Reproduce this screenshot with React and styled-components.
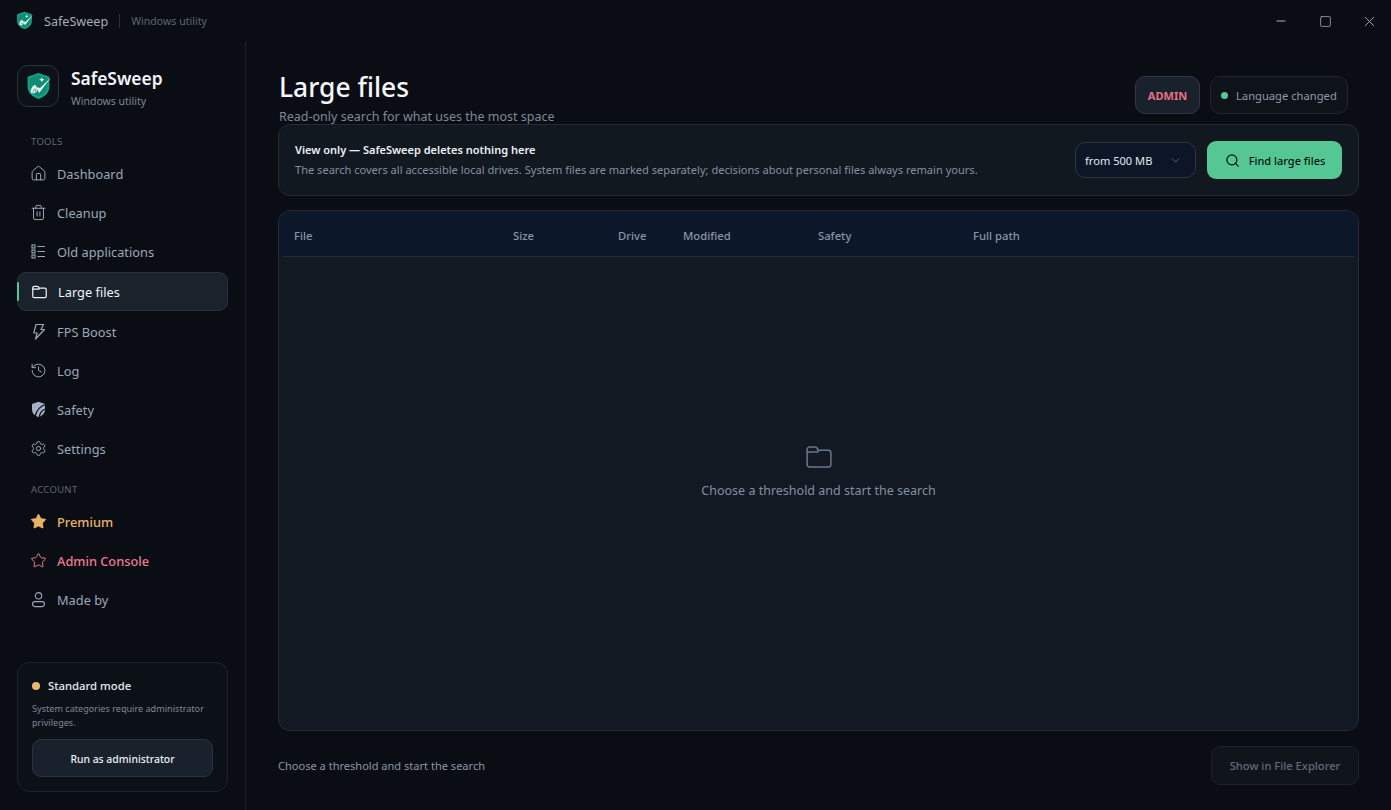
import React from "react";
import styled, { createGlobalStyle } from "styled-components";
import { House, Trash2, History, Settings, Star, Search, ChevronDown, X, Minus, Square } from "lucide-react";

const GlobalStyle = createGlobalStyle`
  html, body {
    margin: 0;
    height: 100%;
    background: #0a0d14;
    font-family: "Noto Sans", "Open Sans", sans-serif;
    color: #e8edf4;
    overflow: hidden;
  }
  * { box-sizing: border-box; }
`;

const Shell = styled.div`
  width: 1391px;
  height: 810px;
  display: grid;
  grid-template-rows: 42px 1fr;
  background: #0a0d14;
`;

const TitleBar = styled.header`
  display: flex;
  align-items: center;
  padding-left: 16px;
`;

const TitleName = styled.span`
  margin-left: 11px;
  font-size: 12.6px;
  color: #a3acb9;
`;

const TitleDivider = styled.span`
  width: 1px;
  height: 14px;
  margin: 0 11px;
  background: #2a313c;
`;

const TitleSub = styled.span`
  font-size: 10.6px;
  color: #5d6674;
`;

const WindowControls = styled.div`
  display: flex;
  margin-left: auto;
  height: 42px;
  color: #b4bcc7;
`;

const WindowButton = styled.button`
  width: 44px;
  height: 42px;
  display: flex;
  align-items: center;
  justify-content: center;
  padding: 0;
  background: none;
  border: 0;
  color: inherit;
`;

const Body = styled.div`
  display: grid;
  grid-template-columns: 246px 1fr;
  min-height: 0;
`;

const Sidebar = styled.aside`
  display: flex;
  flex-direction: column;
  padding: 23px 17px 18px 17px;
  border-right: 1px solid #1b212a;
`;

const Brand = styled.div`
  display: flex;
  align-items: center;
  gap: 12px;
  height: 42px;
`;

const BrandIcon = styled.div`
  width: 42px;
  height: 42px;
  display: flex;
  align-items: center;
  justify-content: center;
  border: 1px solid #2a313b;
  border-radius: 11px;
  background: #0d1219;
`;

const BrandText = styled.div`
  display: flex;
  flex-direction: column;
  padding-top: 4px;
`;

const BrandName = styled.strong`
  font-size: 17.4px;
  line-height: 23px;
  font-weight: 600;
  color: #f2f5f9;
`;

const BrandSub = styled.span`
  margin-top: 4px;
  font-size: 10.5px;
  line-height: 15px;
  color: #7f8997;
`;

const SectionLabel = styled.div`
  margin: ${(p) => p.$top}px 0 6px 14px;
  height: 14px;
  line-height: 14px;
  font-size: 9.5px;
  letter-spacing: 0.3px;
  color: #5f6876;
`;

const NavList = styled.nav`
  display: flex;
  flex-direction: column;
  gap: 2px;
`;

const NavItem = styled.a`
  display: flex;
  align-items: center;
  gap: 10px;
  height: ${(p) => (p.$active ? 39 : 37)}px;
  padding-left: 13px;
  font-size: 12.8px;
  border-radius: 9px;
  position: relative;
  color: ${(p) => p.$color || (p.$active ? "#f0f4f8" : "#9ca8b8")};
  font-weight: ${(p) => (p.$color ? 500 : 400)};
  ${(p) =>
    p.$active &&
    `
    background: #1a222c;
    border: 1px solid #29313c;
    &::before {
      content: "";
      position: absolute;
      left: -1px;
      top: 9px;
      bottom: 9px;
      width: 2px;
      background: #54c795;
      border-radius: 2px;
    }
  `}
`;

const NavIcon = styled.span`
  width: 17px;
  height: 17px;
  display: flex;
  align-items: center;
  justify-content: center;
  flex: none;
`;

const ModeCard = styled.section`
  margin-top: auto;
  padding: 15px 14px 14px 14px;
  height: 130px;
  border: 1px solid #1d232d;
  border-radius: 12px;
  background: #0c1017;
`;

const ModeHead = styled.div`
  display: flex;
  align-items: center;
  gap: 8px;
  font-size: 11.3px;
  line-height: 16px;
  font-weight: 500;
  color: #e6ebf1;
`;

const Dot = styled.span`
  width: ${(p) => p.$size || 8}px;
  height: ${(p) => p.$size || 8}px;
  border-radius: 50%;
  background: ${(p) => p.$color};
  flex: none;
`;

const ModeText = styled.p`
  margin: 8px 0 9px;
  font-size: 9.1px;
  line-height: 14px;
  color: #7f8997;
`;

const AdminRun = styled.button`
  width: 181px;
  height: 38px;
  padding: 2px 0 0;
  border: 1px solid #2b3440;
  border-radius: 9px;
  background: #19212c;
  color: #eef2f6;
  font: 500 10.4px "Noto Sans", sans-serif;
`;

const Main = styled.main`
  display: flex;
  flex-direction: column;
  padding: 20px 32px 25px 32px;
  min-width: 0;
`;

const Header = styled.div`
  display: flex;
  justify-content: space-between;
  align-items: flex-start;
  height: 62px;
`;

const PageTitle = styled.h1`
  margin: 8px 0 0 1px;
  font-size: 26.4px;
  line-height: 34px;
  font-weight: 500;
  color: #f5f7fa;
`;

const PageSub = styled.p`
  margin: 3px 0 0 1px;
  font-size: 12.5px;
  line-height: 20px;
  color: #7f8997;
`;

const HeaderBadges = styled.div`
  display: flex;
  gap: 10px;
  margin-top: 14px;
  margin-right: 11px;
`;

const AdminBadge = styled.div`
  width: 65px;
  height: 38px;
  display: flex;
  align-items: center;
  justify-content: center;
  border: 1px solid #2e3846;
  border-radius: 10px;
  background: #19212c;
  color: #e8708a;
  font-size: 11px;
  font-weight: 700;
`;

const Toast = styled.div`
  height: 38px;
  width: 138px;
  display: flex;
  align-items: center;
  gap: 8px;
  padding-left: 10px;
  border: 1px solid #1f2630;
  border-radius: 10px;
  background: #0e131a;
  color: #8f99a7;
  font-size: 11.2px;
`;

const Notice = styled.section`
  height: 72px;
  display: flex;
  align-items: center;
  padding: 0 16px;
  border: 1px solid #242b35;
  border-radius: 12px;
  background: #121820;
`;

const NoticeText = styled.div`
  flex: 1;
  margin-top: -1px;
`;

const NoticeTitle = styled.div`
  font-size: 11px;
  line-height: 18px;
  font-weight: 600;
  color: #eef2f6;
`;

const NoticeBody = styled.div`
  margin-top: 2px;
  font-size: 11.07px;
  line-height: 18px;
  color: #8390a0;
`;

const Threshold = styled.div`
  width: 121px;
  height: 36px;
  display: flex;
  align-items: center;
  justify-content: space-between;
  padding: 0 13px 0 9px;
  border: 1px solid #2a3545;
  border-radius: 10px;
  background: #0c1626;
  font-size: 11.1px;
  color: #e4e9ef;
`;

const FindButton = styled.button`
  width: 135px;
  height: 38px;
  margin-left: 11px;
  display: flex;
  align-items: center;
  justify-content: center;
  gap: 9px;
  padding: 0 0 0 1px;
  border: 0;
  border-radius: 9px;
  background: #54c795;
  color: #08130e;
  font: 500 11px "Noto Sans", sans-serif;
`;

const TablePanel = styled.section`
  flex: 1;
  margin-top: 14px;
  display: flex;
  flex-direction: column;
  border: 1px solid #242b35;
  border-radius: 12px;
  background: #121923;
  overflow: hidden;
`;

const TableHead = styled.div`
  height: 45px;
  flex: none;
  display: grid;
  grid-template-columns: 219px 105px 65px 135px 155px 1fr;
  align-items: center;
  padding: 4px 4px 0;
  background: #0c1829;
`;

const HeadCell = styled.div`
  padding-left: 11px;
  font-size: 11.25px;
  font-weight: 500;
  color: #8995a5;
`;

const HeadRule = styled.div`
  height: 1px;
  margin: 0 4px;
  background: #242d39;
  flex: none;
`;

const EmptyState = styled.div`
  flex: 1;
  display: flex;
  flex-direction: column;
  align-items: center;
  justify-content: center;
  gap: 10px;
  padding-bottom: 45px;
  color: #66778c;
`;

const EmptyText = styled.div`
  font-size: 12.5px;
  line-height: 18px;
  color: #8390a0;
`;

const Footer = styled.footer`
  display: flex;
  justify-content: space-between;
  align-items: center;
  margin-top: 15px;
  height: 39px;
`;

const FooterText = styled.span`
  font-size: 11.05px;
  color: #8c97a6;
`;

const ExplorerButton = styled.button`
  width: 148px;
  height: 39px;
  padding: 0;
  border: 1px solid #1c222b;
  border-radius: 9px;
  background: #10151c;
  color: #626b78;
  font: 500 11.2px "Noto Sans", sans-serif;
`;

const LogoMark = ({ size }) => (
  <svg width={size} height={size * 1.12} viewBox="0 0 24 27" fill="none">
    <path d="M12 1 L22.5 4.5 V14 C22.5 20 18 24 12 26 C6 24 1.5 20 1.5 14 V4.5 Z" fill="#16a387" />
    <path d="M12 3 L20.6 5.9 V14 C20.6 18.6 17 21.8 12 23.8 C7 21.8 3.4 18.6 3.4 14 V5.9 Z" fill="#0e8c75" />
    <path d="M10.6 16.4 L12.6 20.2 L24 5.2 L13 15.8 L11.8 14.4 Z" fill="#f4f8f7" />
    <path d="M4.6 20 C4.2 16.6 6 13.6 8.6 12.4 L11.6 15.8 C10.8 19 8.4 21.4 4.6 20 Z" fill="#e8f0ed" />
    <path d="M6.6 19.6 L8.4 15.8 M9 19 L9.8 16.4" stroke="#0e8c75" strokeWidth=".7" />
    <path d="M15.2 5 l.7 1.8 1.8 .7 -1.8 .7 -.7 1.8 -.7 -1.8 -1.8 -.7 1.8 -.7 Z" fill="#f4f8f7" />
  </svg>
);

const FolderIcon = ({ size = 17, width = 1.5 }) => (
  <svg width={size} height={size} viewBox="0 0 24 24" fill="none" stroke="currentColor" strokeWidth={width} strokeLinejoin="round" strokeLinecap="round">
    <path d="M2.5 6 A2 2 0 0 1 4.5 4 H9 C10 4 10.6 4.6 11.2 6.5 H19.5 A2 2 0 0 1 21.5 8.5 V18 A2 2 0 0 1 19.5 20 H4.5 A2 2 0 0 1 2.5 18 Z" />
    <path d="M2.5 8 H11.2 V6.5" />
  </svg>
);

const AppsIcon = () => (
  <svg width="17" height="17" viewBox="0 0 17 17" fill="none" stroke="currentColor" strokeWidth="1.1">
    <rect x="2" y="2" width="3" height="3" />
    <rect x="2" y="7" width="3" height="3" />
    <rect x="2" y="12" width="3" height="3" />
    <path d="M7.5 3.5 H15 M7.5 8.5 H15 M7.5 13.5 H15" />
  </svg>
);

const BoltIcon = () => (
  <svg width="17" height="17" viewBox="0 0 17 17" fill="none" stroke="currentColor" strokeWidth="1.2" strokeLinejoin="round">
    <path d="M6 1.5 H13.5 L11 6.5 H14.5 L5.5 16 L7.2 10 H3.8 Z" />
  </svg>
);

const ShieldIcon = () => (
  <svg width="17" height="17" viewBox="0 0 17 17">
    <path d="M8.5 .8 L15 3 V8.5 C15 12.2 12.2 14.8 8.5 16.2 C4.8 14.8 2 12.2 2 8.5 V3 Z" fill="#a5b1c1" />
    <path d="M15.5 3.5 C11 5 6.8 8 5.4 14.8 M15.5 8 C12.4 9 10 11 9.2 16" fill="none" stroke="#0a0d14" strokeWidth="1.3" />
  </svg>
);

const PersonIcon = () => (
  <svg width="17" height="17" viewBox="0 0 17 17" fill="none" stroke="currentColor" strokeWidth="1.1">
    <circle cx="8.5" cy="4.8" r="3.2" />
    <rect x="2.5" y="10.6" width="12" height="5" rx="2.5" />
  </svg>
);

const tools = [
  { label: "Dashboard", icon: <House size={17} strokeWidth={1.4} /> },
  { label: "Cleanup", icon: <Trash2 size={17} strokeWidth={1.4} /> },
  { label: "Old applications", icon: <AppsIcon /> },
  { label: "Large files", icon: <FolderIcon size={18} width={1.7} />, active: true },
  { label: "FPS Boost", icon: <BoltIcon /> },
  { label: "Log", icon: <History size={17} strokeWidth={1.4} /> },
  { label: "Safety", icon: <ShieldIcon /> },
  { label: "Settings", icon: <Settings size={17} strokeWidth={1.4} /> },
];

const account = [
  { label: "Premium", color: "#e8b463", icon: <Star size={17} fill="#e8b463" strokeWidth={1.4} /> },
  { label: "Admin Console", color: "#ee7a92", icon: <Star size={17} strokeWidth={1.4} /> },
  { label: "Made by", icon: <PersonIcon /> },
];

const columns = ["File", "Size", "Drive", "Modified", "Safety", "Full path"];

export default function App() {
  return (
    <Shell>
      <GlobalStyle />
      <TitleBar>
        <LogoMark size={17} />
        <TitleName>SafeSweep</TitleName>
        <TitleDivider />
        <TitleSub>Windows utility</TitleSub>
        <WindowControls>
          <WindowButton><Minus size={14} strokeWidth={1.6} /></WindowButton>
          <WindowButton><Square size={13} strokeWidth={1.3} /></WindowButton>
          <WindowButton><X size={17} strokeWidth={1.2} /></WindowButton>
        </WindowControls>
      </TitleBar>
      <Body>
        <Sidebar>
          <Brand>
            <BrandIcon><LogoMark size={25} /></BrandIcon>
            <BrandText>
              <BrandName>SafeSweep</BrandName>
              <BrandSub>Windows utility</BrandSub>
            </BrandText>
          </Brand>
          <SectionLabel $top={28}>TOOLS</SectionLabel>
          <NavList>
            {tools.map((t) => (
              <NavItem key={t.label} $active={t.active}>
                <NavIcon>{t.icon}</NavIcon>
                {t.label}
              </NavItem>
            ))}
          </NavList>
          <SectionLabel $top={16}>ACCOUNT</SectionLabel>
          <NavList>
            {account.map((t) => (
              <NavItem key={t.label} $color={t.color}>
                <NavIcon>{t.icon}</NavIcon>
                {t.label}
              </NavItem>
            ))}
          </NavList>
          <ModeCard>
            <ModeHead>
              <Dot $color="#e8b86d" />
              Standard mode
            </ModeHead>
            <ModeText>System categories require administrator privileges.</ModeText>
            <AdminRun>Run as administrator</AdminRun>
          </ModeCard>
        </Sidebar>
        <Main>
          <Header>
            <div>
              <PageTitle>Large files</PageTitle>
              <PageSub>Read-only search for what uses the most space</PageSub>
            </div>
            <HeaderBadges>
              <AdminBadge>ADMIN</AdminBadge>
              <Toast>
                <Dot $color="#54c795" $size={7} />
                Language changed
              </Toast>
            </HeaderBadges>
          </Header>
          <Notice>
            <NoticeText>
              <NoticeTitle>View only — SafeSweep deletes nothing here</NoticeTitle>
              <NoticeBody>
                The search covers all accessible local drives. System files are marked separately; decisions about personal files always remain yours.
              </NoticeBody>
            </NoticeText>
            <Threshold>
              from 500 MB
              <ChevronDown size={13} strokeWidth={1.2} color="#7f8997" />
            </Threshold>
            <FindButton>
              <Search size={15} strokeWidth={2} />
              Find large files
            </FindButton>
          </Notice>
          <TablePanel>
            <TableHead>
              {columns.map((c) => (
                <HeadCell key={c}>{c}</HeadCell>
              ))}
            </TableHead>
            <HeadRule />
            <EmptyState>
              <FolderIcon size={30} width={1.2} />
              <EmptyText>Choose a threshold and start the search</EmptyText>
            </EmptyState>
          </TablePanel>
          <Footer>
            <FooterText>Choose a threshold and start the search</FooterText>
            <ExplorerButton>Show in File Explorer</ExplorerButton>
          </Footer>
        </Main>
      </Body>
    </Shell>
  );
}
